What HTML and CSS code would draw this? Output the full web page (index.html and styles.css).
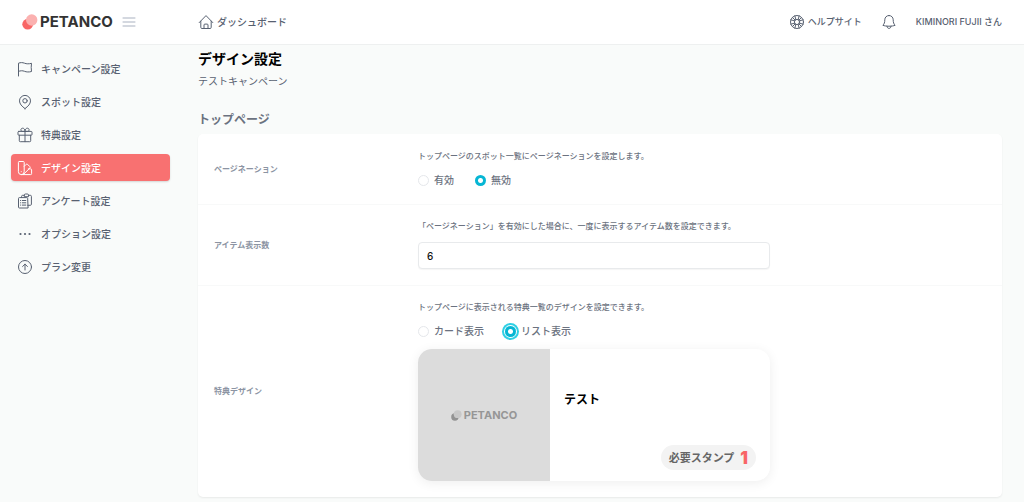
FILE: index.html
```html
<!DOCTYPE html>
<html lang="ja">
<head>
<meta charset="utf-8">
<meta name="viewport" content="width=device-width, initial-scale=1">
<title>デザイン設定 | PETANCO</title>
<link rel="stylesheet" href="styles.css">
</head>
<body>
<header class="header">
  <div class="header-brand">
    <a class="logo" href="#">
      <svg class="logo-mark" viewBox="0 0 16 16" aria-hidden="true"><circle class="mark-back" cx="5.7" cy="10.2" r="5.4"/><circle class="mark-front" cx="9.7" cy="6" r="5.7"/></svg>
      <span>PETANCO</span>
    </a>
    <button class="icon-button menu-button" type="button" aria-label="メニュー">
      <svg class="menu-icon" viewBox="0 0 14 12" aria-hidden="true"><path d="M1 2h12M1 6h12M1 10h12"/></svg>
    </button>
  </div>
  <a class="header-link" href="#">
    <svg class="icon" viewBox="0 0 16 16" aria-hidden="true"><path d="M1.2 8.6 8 1.6l6.8 7M2.8 7.2v6.2c0 .7.4 1.1 1.1 1.1h8.2c.7 0 1.1-.4 1.1-1.1V7.2M6 14.4V11c0-.6.3-.9.9-.9h2.2c.6 0 .9.3.9.9v3.4"/></svg>
    <span>ダッシュボード</span>
  </a>
  <nav class="header-tools" aria-label="アカウント">
    <a class="header-link" href="#">
      <svg class="icon" viewBox="0 0 16 16" aria-hidden="true"><circle cx="8" cy="8" r="6.5"/><circle cx="8" cy="8" r="2.6"/><path d="M6.9 5.6 5.8 1.9M9.1 5.6l1.100-3.700M6.9 10.4l-1.100 3.700M9.1 10.4l1.100 3.700M5.6 6.9 1.9 5.8M5.6 9.1l-3.700 1.100M10.4 6.9l3.700-1.100M10.4 9.1l3.700 1.100M3.6 3.6l2.500 2.500M12.4 3.6 9.9 6.1M3.6 12.4l2.500-2.500M12.4 12.4 9.9 9.9"/></svg>
      <span>ヘルプサイト</span>
    </a>
    <button class="icon-button" type="button" aria-label="通知">
      <svg class="icon" viewBox="0 0 16 16" aria-hidden="true"><path d="M8 1.5c-2.500 0-4.200 1.900-4.200 4.300 0 2.700-.6 4.200-1.900 5.500 1.500.6 3.800.9 6.100.9s4.600-.3 6.100-.9c-1.300-1.300-1.900-2.800-1.900-5.500 0-2.400-1.700-4.300-4.200-4.300zM6 12.200c0 1.300.8 2.200 2 2.200s2-.9 2-2.200"/></svg>
    </button>
    <a class="user-name" href="#">KIMINORI FUJII さん</a>
  </nav>
</header>
<div class="layout">
  <nav class="sidebar" aria-label="設定">
    <a class="nav-item" href="#">
      <svg class="icon" viewBox="0 0 16 16" aria-hidden="true"><path d="M1.500 15V2.200c2-.8 4-.8 6 0s4.500.8 7 .1c-.4 2.700-.4 5.300 0 8.200-2.500.7-5 .6-7-.2s-4-.7-6 .1"/></svg>
      <span>キャンペーン設定</span>
    </a>
    <a class="nav-item" href="#">
      <svg class="icon" viewBox="0 0 16 16" aria-hidden="true"><path d="M8 14.600C4.800 12.300 2.500 9.800 2.500 6.900a5.500 5.500 0 0 1 11 0c0 2.900-2.300 5.400-5.500 7.700z"/><circle cx="8" cy="6.800" r="2.200"/></svg>
      <span>スポット設定</span>
    </a>
    <a class="nav-item" href="#">
      <svg class="icon" viewBox="0 0 16 16" aria-hidden="true"><rect x="1" y="4.400" width="14" height="3.800" rx=".8"/><path d="M2.300 8.200v5.500c0 .7.3 1 1 1h9.400c.7 0 1-.3 1-1V8.200M8 4.400v10.300M8 4.400C8 2.500 7.100 1.200 5.700 1.200c-1.100 0-1.800.7-1.800 1.600 0 1 .7 1.600 1.800 1.600H8zM8 4.400c0-1.900.9-3.200 2.300-3.200 1.100 0 1.800.7 1.800 1.600 0 1-.7 1.600-1.800 1.600H8z"/></svg>
      <span>特典設定</span>
    </a>
    <a class="nav-item nav-item-active" href="#" aria-current="page">
      <svg class="icon" viewBox="0 0 16 16" aria-hidden="true"><path d="M2.300 1.500h4c.6 0 .9.300.9.900v9.300a2.900 2.900 0 0 1-5.800 0V2.400c0-.6.3-.9.9-.9zM4.300 14.600h9.400c.6 0 .9-.3.900-.9v-3.900c0-.6-.3-.9-.9-.9h-2.400M7.200 6.300l2-2c.4-.4.9-.4 1.300 0l2.400 2.400c.4.4.4.9 0 1.300l-6.500 6.500M4.200 11.700h.1"/></svg>
      <span>デザイン設定</span>
    </a>
    <a class="nav-item" href="#">
      <svg class="icon" viewBox="0 0 16 16" aria-hidden="true"><path d="M10.700 15H2.400c-.6 0-.9-.3-.9-.9V5.500c0-.6.3-.9.9-.9h7.400c.6 0 .9.300.9.900zM4.600 4.600V3.300c0-.6.4-1 1-1h1.700M11.500 2.300h1.900c.6 0 1 .4 1 1v8c0 .6-.4 1-1 1h-2.700M7.300 3.300V2.100c0-.7.5-1.100 1.100-1.100h2c.6 0 1.100.4 1.100 1.100v1.200zM3.500 7.500h.2M5.300 7.500h3.500M3.500 9.800h.2M5.300 9.800h3.500M3.500 12.100h.2M5.300 12.100h3.500"/></svg>
      <span>アンケート設定</span>
    </a>
    <a class="nav-item" href="#">
      <svg class="icon icon-dots" viewBox="0 0 16 16" aria-hidden="true"><circle cx="3.500" cy="8" r="1.100"/><circle cx="8" cy="8" r="1.100"/><circle cx="12.500" cy="8" r="1.100"/></svg>
      <span>オプション設定</span>
    </a>
    <a class="nav-item" href="#">
      <svg class="icon" viewBox="0 0 16 16" aria-hidden="true"><circle cx="8" cy="8" r="6.500"/><path d="M8 11V5.200M5.600 7.500 8 5.100l2.400 2.400"/></svg>
      <span>プラン変更</span>
    </a>
  </nav>
  <main class="main">
    <h1 class="page-title">デザイン設定</h1>
    <p class="page-subtitle">テストキャンペーン</p>
    <h2 class="section-title">トップページ</h2>
    <form class="panel">
      <div class="row">
        <span class="row-label" id="paging-label">ページネーション</span>
        <div class="row-body" role="radiogroup" aria-labelledby="paging-label">
          <p class="row-help">トップページのスポット一覧にページネーションを設定します。</p>
          <div class="radio-list">
            <label class="radio-option"><input class="radio" type="radio" name="paging">有効</label>
            <label class="radio-option"><input class="radio" type="radio" name="paging" checked>無効</label>
          </div>
        </div>
      </div>
      <div class="row">
        <label class="row-label" for="item-count">アイテム表示数</label>
        <div class="row-body">
          <p class="row-help">「ページネーション」を有効にした場合に、一度に表示するアイテム数を設定できます。</p>
          <input class="text-field" id="item-count" type="text" value="6">
        </div>
      </div>
      <div class="row">
        <span class="row-label" id="reward-label">特典デザイン</span>
        <div class="row-body" role="radiogroup" aria-labelledby="reward-label">
          <p class="row-help">トップページに表示される特典一覧のデザインを設定できます。</p>
          <div class="radio-list">
            <label class="radio-option"><input class="radio" type="radio" name="reward">カード表示</label>
            <label class="radio-option"><input class="radio radio-focused" type="radio" name="reward" checked>リスト表示</label>
          </div>
          <article class="reward">
            <div class="reward-image">
              <div class="logo logo-muted">
                <svg class="logo-mark" viewBox="0 0 16 16" aria-hidden="true"><circle class="mark-back" cx="5.700" cy="10.200" r="5.400"/><circle class="mark-front" cx="9.700" cy="6" r="5.700"/></svg>
                <span>PETANCO</span>
              </div>
            </div>
            <div class="reward-content">
              <h3 class="reward-title">テスト</h3>
              <div class="stamp-badge">必要スタンプ<span class="stamp-count">1</span></div>
            </div>
          </article>
        </div>
      </div>
    </form>
  </main>
</div>
</body>
</html>
```
FILE: styles.css
```css
* {
  box-sizing: border-box;
}

body {
  margin: 0;
  background: #f9fbfa;
  color: #586171;
  font-family: Inter, "Noto Sans CJK JP", sans-serif;
  font-size: 10px;
  line-height: 16px;
}

h1, h2, h3, p {
  margin: 0;
}

a {
  color: inherit;
  text-decoration: none;
}

.header {
  display: flex;
  align-items: center;
  height: 45px;
  padding: 0 22px;
  background: #fff;
  border-bottom: 1px solid #eef0f0;
  font-weight: 500;
}

.header-brand {
  display: flex;
  align-items: center;
  gap: 9px;
  width: 176px;
}

.logo {
  display: flex;
  align-items: center;
  gap: 2px;
  color: #333;
  font-size: 15px;
  font-weight: 700;
}

.logo-mark {
  width: 16px;
  height: 16px;
}

.mark-back {
  fill: #f86666;
}

.mark-front {
  fill: #fbb1b0;
}

.icon-button {
  display: flex;
  padding: 0;
  border: 0;
  background: none;
  color: inherit;
}

.icon,
.menu-icon {
  flex: none;
  fill: none;
  stroke: currentColor;
  stroke-linecap: round;
  stroke-linejoin: round;
}

.icon {
  width: 16px;
  height: 16px;
}

.icon-dots {
  fill: currentColor;
  stroke: none;
}

.menu-button {
  color: #a9b1c0;
}

.menu-icon {
  width: 14px;
  height: 12px;
}

.header-link {
  display: flex;
  align-items: center;
  gap: 3px;
}

.header-tools {
  display: flex;
  align-items: center;
  gap: 19px;
  margin-left: auto;
  font-size: 9px;
}

.layout {
  display: flex;
}

.sidebar {
  display: flex;
  flex: none;
  flex-direction: column;
  gap: 6px;
  width: 170px;
  padding: 10px 0 0 11px;
}

.nav-item {
  display: flex;
  align-items: center;
  gap: 8px;
  height: 27px;
  padding: 0 6px;
  border-radius: 4px;
  font-weight: 500;
}

.nav-item-active {
  background: #f87171;
  box-shadow: 0 1px 2px rgba(0, 0, 0, 0.15);
  color: #fff;
}

.main {
  flex: 1;
  min-width: 0;
  padding: 4px 22px 4px 28px;
}

.page-title {
  color: #000;
  font-size: 14px;
  font-weight: 700;
  line-height: 20px;
}

.page-subtitle {
  margin-top: 4px;
}

.section-title {
  margin-top: 21px;
  color: #6b7280;
  font-size: 12px;
  font-weight: 700;
  line-height: 20px;
}

.panel {
  margin-top: 4px;
  background: #fff;
  border-radius: 5px;
  box-shadow: 0 1px 2px rgba(0, 0, 0, 0.07);
}

.row {
  display: grid;
  grid-template-columns: 204px minmax(0, 352px);
  align-items: center;
  padding: 16px;
}

.row + .row {
  padding-top: 15px;
  border-top: 1px solid #f8f9f9;
}

.row-label {
  color: #8c94a3;
  font-size: 8px;
  font-weight: 700;
  line-height: 12px;
}

.row-body {
  display: flex;
  flex-direction: column;
  gap: 10px;
}

.row-help {
  color: #6b7280;
  font-size: 8px;
  font-weight: 500;
  line-height: 12px;
}

.radio-list {
  display: flex;
  gap: 21px;
  color: #6b7280;
  font-weight: 500;
}

.radio-option {
  display: flex;
  align-items: center;
  gap: 5px;
}

.radio {
  width: 11px;
  height: 11px;
  margin: 0;
  appearance: none;
  border: 1px solid #e5e7eb;
  border-radius: 50%;
  background: #fff;
}

.radio:checked {
  border: 0;
  background: radial-gradient(circle, #fff 2px, #06b6d4 3px);
}

.radio-focused {
  box-shadow: 0 0 0 1px #fff, 0 0 0 3px #2fd0e4;
}

.text-field {
  width: 100%;
  height: 27px;
  padding: 0 8px;
  border: 1px solid #e8eaec;
  border-radius: 4px;
  background: #fff;
  box-shadow: 0 1px 1px rgba(0, 0, 0, 0.04);
  color: #111;
  font: inherit;
  font-weight: 500;
}

.reward {
  display: flex;
  height: 132px;
  overflow: hidden;
  border-radius: 14px;
  background: #fff;
  box-shadow: 0 2px 12px rgba(0, 0, 0, 0.07);
}

.reward-image {
  display: flex;
  align-items: center;
  justify-content: center;
  width: 132px;
  background: #dcdcdc;
}

.logo-muted {
  color: #969696;
  font-size: 11px;
}

.logo-muted .logo-mark {
  width: 11px;
  height: 11px;
}

.logo-muted .mark-back {
  fill: #929292;
}

.logo-muted .mark-front {
  fill: #c8c8c8;
}

.reward-content {
  display: flex;
  flex: 1;
  flex-direction: column;
  gap: 5px;
  padding: 11px 14px;
}

.reward-title {
  display: flex;
  flex: 1;
  align-items: center;
  color: #000;
  font-size: 12px;
  font-weight: 700;
}

.stamp-badge {
  display: flex;
  align-items: center;
  align-self: flex-end;
  gap: 6px;
  height: 25px;
  padding: 0 8px;
  border-radius: 13px;
  background: #f3f3f3;
  color: #666;
  font-size: 11px;
  font-weight: 700;
}

.stamp-count {
  color: #f86666;
  font-size: 17px;
  font-weight: 900;
}
```
